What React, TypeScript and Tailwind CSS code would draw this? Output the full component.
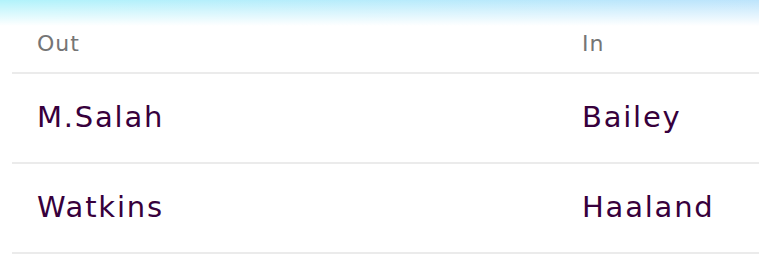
const ROWS = [
  { out: "M.Salah", in: "Bailey" },
  { out: "Watkins", in: "Haaland" },
];

export default function App() {
  return (
    <div
      className="min-h-screen w-full bg-white bg-no-repeat bg-[length:100%_26px] bg-[linear-gradient(to_bottom,rgba(255,255,255,0),#ffffff),linear-gradient(to_right,#b2f3fb,#bde4fc)]"
      style={{ fontFamily: "'DejaVu Sans', 'Noto Sans', sans-serif" }}
    >
      <div className="ml-[12px]">
        {/* header */}
        <div className="h-[74px] pt-[14px] flex items-center border-b-2 border-[#ebebeb] text-[22px] tracking-[1px] text-[#757575]">
          <span className="pl-[25px] w-[570px]">Out</span>
          <span>In</span>
        </div>

        {ROWS.map((r) => (
          <div
            key={r.out}
            className="h-[90px] flex items-center border-b-2 border-[#ebebeb] text-[29px] tracking-[1.8px] text-[#37003c]"
          >
            <span className="pl-[25px] w-[570px]">{r.out}</span>
            <span>{r.in}</span>
          </div>
        ))}
      </div>
    </div>
  );
}
